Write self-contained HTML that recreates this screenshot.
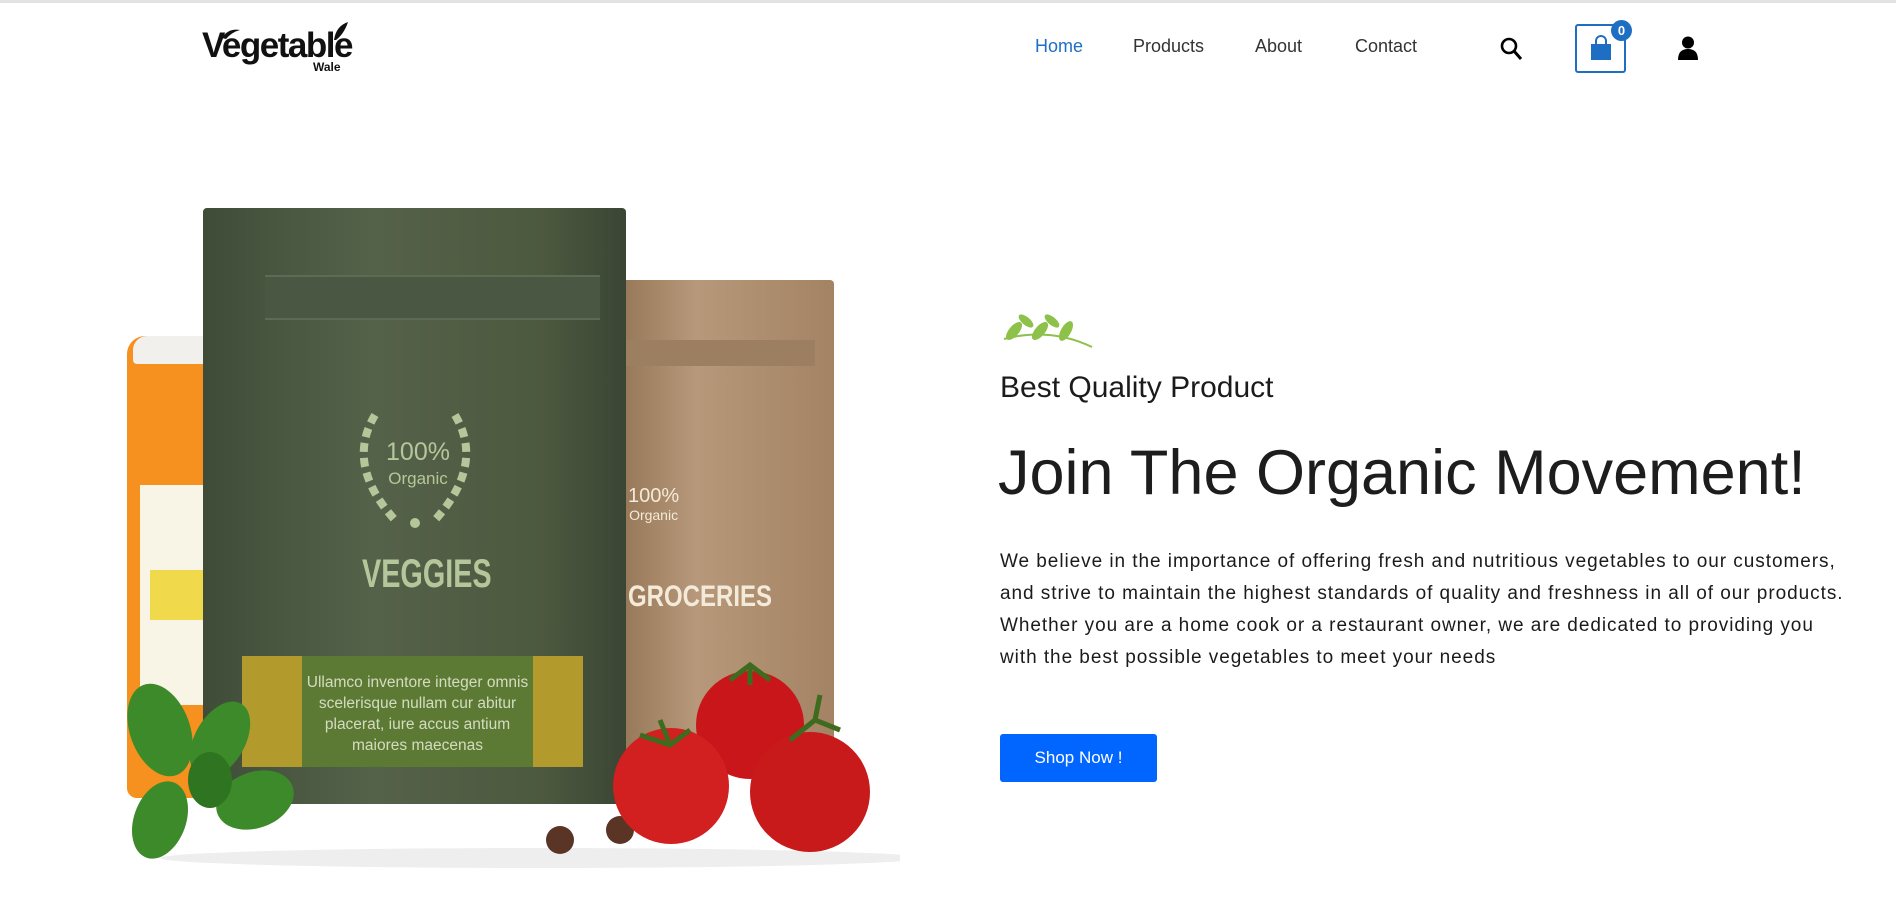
<!DOCTYPE html>
<html><head><meta charset="utf-8"><style>
*{margin:0;padding:0;box-sizing:border-box}
body{width:1896px;height:899px;background:#fff;font-family:"Liberation Sans",sans-serif;color:#1b1b1b;position:relative;overflow:hidden}
.abs{position:absolute}
.topline{left:0;top:0;width:1896px;height:3px;background:#e2e2e2}
.nav a{position:absolute;top:36px;font-size:18px;color:#333;text-decoration:none}
.para{left:1000px;top:546px;font-size:19px;letter-spacing:0.95px;line-height:32px;white-space:nowrap;color:#1b1b1b}
</style></head><body>
<div class="abs topline"></div>
<div class="abs" style="left:202px;top:28px;font-weight:bold;font-size:35px;letter-spacing:-1.5px;color:#111;line-height:36px">Vegetable</div>
<div class="abs" style="left:313px;top:60px;font-weight:bold;font-size:12px;color:#111">Wale</div>
<svg class="abs" style="left:218px;top:20px" width="140" height="22"><path d="M4 18 Q10 8 22 10 Q14 12 8 19Z" fill="#111"/><path d="M116 20 Q118 6 130 2 Q126 14 118 20Z" fill="#111"/></svg>
<div class="nav">
<a style="left:1035px;color:#1e6fc4">Home</a>
<a style="left:1133px">Products</a>
<a style="left:1255px">About</a>
<a style="left:1355px">Contact</a>
</div>
<svg class="abs" style="left:1500px;top:37px" width="24" height="26"><circle cx="9" cy="9" r="7" fill="none" stroke="#000" stroke-width="2.6"/><path d="M14 14 L21 22" stroke="#000" stroke-width="3"/></svg>
<div class="abs" style="left:1575px;top:24px;width:51px;height:49px;border:2px solid #1e6fc4;border-radius:3px"></div>
<svg class="abs" style="left:1589px;top:34px" width="24" height="28"><path d="M7 10 V7 a5 5 0 0 1 10 0 V10" fill="none" stroke="#1e6fc4" stroke-width="2"/><rect x="2" y="10" width="20" height="16" fill="#1e6fc4"/></svg>
<div class="abs" style="left:1611px;top:20px;width:21px;height:21px;border-radius:50%;background:#1e6fc4;color:#fff;font-size:13px;font-weight:bold;text-align:center;line-height:21px">0</div>
<svg class="abs" style="left:1677px;top:36px" width="22" height="24"><circle cx="11" cy="6.5" r="6" fill="#000"/><path d="M1 24 Q1 13 11 13 Q21 13 21 24Z" fill="#000"/></svg>

<div class="abs" style="left:127px;top:336px;width:100px;height:462px;background:#f6901e;border-radius:18px 18px 10px 10px"></div>
<div class="abs" style="left:133px;top:336px;width:90px;height:28px;background:#f2f0ec;border-radius:14px 14px 4px 4px"></div>
<div class="abs" style="left:140px;top:485px;width:80px;height:220px;background:#f8f4e6"></div>
<div class="abs" style="left:150px;top:570px;width:70px;height:50px;background:#f0d94a"></div>
<div class="abs" style="left:605px;top:280px;width:229px;height:494px;background:linear-gradient(90deg,#8f7050,#b7987a 40%,#a38363);border-radius:4px"></div>
<div class="abs" style="left:615px;top:340px;width:200px;height:26px;background:#9c7f60"></div>
<div class="abs" style="left:628px;top:580px;font-weight:bold;font-size:30px;color:#f3ead9;transform:scaleX(.8);transform-origin:left">GROCERIES</div>
<div class="abs" style="left:628px;top:487px;font-size:20px;color:#f3ead9;text-align:center;line-height:18px">100%<br><span style="font-size:14px">Organic</span></div>
<div class="abs" style="left:203px;top:208px;width:423px;height:596px;background:linear-gradient(90deg,#3f4c38,#55624a 40%,#4c593f 80%,#3a4634);border-radius:4px"></div>
<div class="abs" style="left:265px;top:275px;width:335px;height:45px;background:#4a5742;border-top:2px solid #5e6b54;border-bottom:2px solid #5e6b54"></div>
<div class="abs" style="left:242px;top:656px;width:341px;height:111px;background:#5d7a35"></div>
<div class="abs" style="left:242px;top:656px;width:60px;height:111px;background:#b39a2c"></div>
<div class="abs" style="left:533px;top:656px;width:50px;height:111px;background:#b39a2c"></div>
<div class="abs" style="left:302px;top:672px;width:231px;text-align:center;font-size:15.5px;line-height:21px;color:#d4dcc0">Ullamco inventore integer omnis scelerisque nullam cur abitur placerat, iure accus antium maiores maecenas</div>
<div class="abs" style="left:378px;top:440px;width:80px;text-align:center;font-size:25px;color:#b5c79a;line-height:24px">100%<br><span style="font-size:17px">Organic</span></div>
<svg class="abs" style="left:345px;top:405px" width="140" height="130"><path d="M30 10 Q0 60 50 115" fill="none" stroke="#b5c79a" stroke-width="8" stroke-dasharray="9 6"/><path d="M110 10 Q140 60 90 115" fill="none" stroke="#b5c79a" stroke-width="8" stroke-dasharray="9 6"/><circle cx="70" cy="118" r="5" fill="#b5c79a"/></svg>
<div class="abs" style="left:362px;top:552px;font-weight:bold;font-size:40px;color:#b5c79a;transform:scaleX(.72);transform-origin:left">VEGGIES</div>
<svg class="abs" style="left:100px;top:660px" width="800" height="210">
<ellipse cx="440" cy="198" rx="380" ry="10" fill="#eee"/>
<g fill="#3c8a2a"><ellipse cx="60" cy="70" rx="30" ry="48" transform="rotate(-20 60 70)"/><ellipse cx="120" cy="80" rx="25" ry="42" transform="rotate(30 120 80)"/><ellipse cx="155" cy="140" rx="28" ry="40" transform="rotate(70 155 140)"/><ellipse cx="60" cy="160" rx="26" ry="40" transform="rotate(20 60 160)"/><ellipse cx="110" cy="120" rx="22" ry="28" fill="#2f7420"/></g>
<g fill="#5a3424"><circle cx="460" cy="180" r="14"/><circle cx="520" cy="170" r="14"/></g>
<circle cx="650" cy="65" r="54" fill="#c8161a"/>
<circle cx="571" cy="126" r="58" fill="#d21f1f"/>
<circle cx="710" cy="132" r="60" fill="#c81a1a"/>
<g stroke="#3e6b1e" stroke-width="5" fill="none"><path d="M540 75 l30 10 l20 -15 M570 85 l-10 -25"/><path d="M630 20 l20 -15 l20 15 M650 5 v20"/><path d="M690 80 l25 -20 l25 10 M715 60 l5 -25"/></g>
</svg>

<svg class="abs" style="left:1000px;top:309px" width="94" height="40"><g fill="#8dc14a"><ellipse cx="14" cy="22" rx="5" ry="11" transform="rotate(40 14 22)"/><ellipse cx="40" cy="22" rx="5" ry="11" transform="rotate(40 40 22)"/><ellipse cx="66" cy="22" rx="5" ry="11" transform="rotate(30 66 22)"/><ellipse cx="26" cy="12" rx="4" ry="9" transform="rotate(-50 26 12)"/><ellipse cx="52" cy="12" rx="4" ry="9" transform="rotate(-50 52 12)"/></g><path d="M4 30 Q50 18 92 38" stroke="#8dc14a" stroke-width="2" fill="none"/></svg>
<div class="abs" style="left:1000px;top:371px;font-size:30px">Best Quality Product</div>
<div class="abs" style="left:998px;top:437px;font-size:63px;line-height:72px;color:#1d1d1d">Join The Organic Movement!</div>
<div class="abs para">We believe in the importance of offering fresh and nutritious vegetables to our customers,<br>and strive to maintain the highest standards of quality and freshness in all of our products.<br>Whether you are a home cook or a restaurant owner, we are dedicated to providing you<br>with the best possible vegetables to meet your needs</div>
<div class="abs" style="left:1000px;top:734px;width:157px;height:48px;background:#0066ff;border-radius:3px;color:#fff;font-size:17px;text-align:center;line-height:48px">Shop Now !</div>
</body></html>
